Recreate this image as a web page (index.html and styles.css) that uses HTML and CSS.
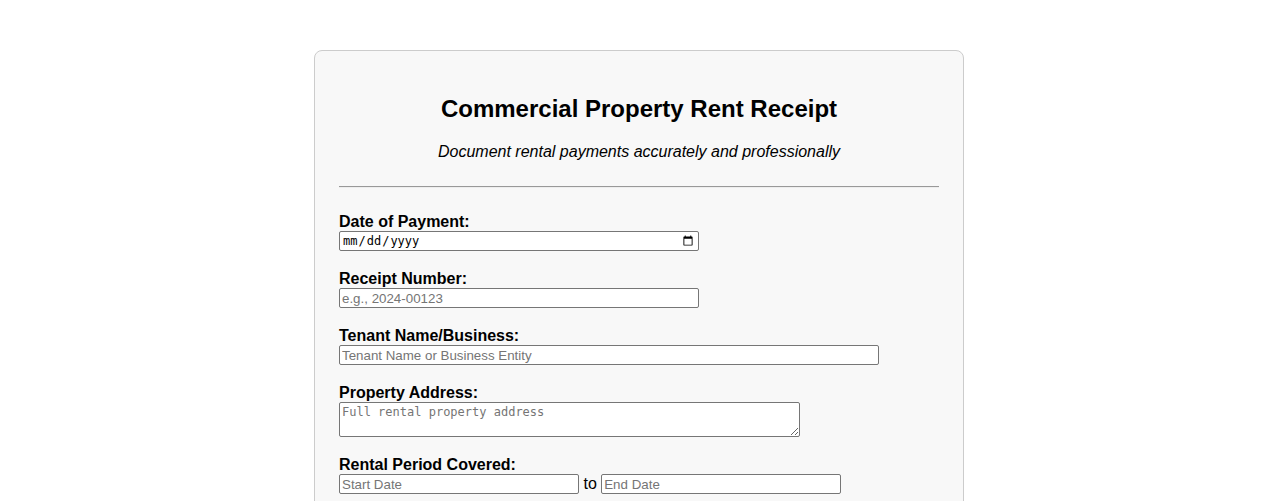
FILE: index.html
```html
<!DOCTYPE html>
<html lang="en">
<head>
<meta charset="utf-8">
<title>Commercial Property Rent Receipt</title>
<link rel="stylesheet" href="styles.css">
</head>
<body>
<div class="receipt">
  <h1 class="title">Commercial Property Rent Receipt</h1>
  <p class="subtitle">Document rental payments accurately and professionally</p>
  <hr class="divider">
  <form class="form">
    <div class="field">
      <label class="label" for="pay-date">Date of Payment:</label>
      <div class="control"><input class="input input-date" type="date" id="pay-date"></div>
    </div>
    <div class="field">
      <label class="label" for="receipt-no">Receipt Number:</label>
      <div class="control"><input class="input input-md" type="text" id="receipt-no" placeholder="e.g., 2024-00123"></div>
    </div>
    <div class="field">
      <label class="label" for="tenant">Tenant Name/Business:</label>
      <div class="control"><input class="input input-lg" type="text" id="tenant" placeholder="Tenant Name or Business Entity"></div>
    </div>
    <div class="field">
      <label class="label" for="address">Property Address:</label>
      <div class="control"><textarea class="textarea" id="address" placeholder="Full rental property address"></textarea></div>
    </div>
    <div class="field">
      <label class="label" for="start">Rental Period Covered:</label>
      <div class="control"><input class="input input-sm" type="text" id="start" placeholder="Start Date"> to <input class="input input-sm" type="text" id="end" placeholder="End Date"></div>
    </div>
  </form>
</div>
</body>
</html>
```

FILE: styles.css
```css
html, body {
  background: #ffffff;
}
body {
  margin: 0;
  padding: 0 8px;
  font-family: "Liberation Sans", Arial, sans-serif;
  font-size: 16px;
  color: #000;
}
.receipt {
  max-width: 600px;
  margin: 50px auto;
  padding: 24px;
  background: #f8f8f8;
  border: 1px solid #cccccc;
  border-radius: 8px;
}
.title {
  font-size: 24px;
  font-weight: bold;
  text-align: center;
  margin: 20px 0 20px;
}
.subtitle {
  font-style: italic;
  text-align: center;
  margin: 0;
}
.divider {
  margin: 25px 0 25px;
  border: 0;
  border-top: 1px solid #999;
  border-bottom: 1px solid #eee;
  height: 0;
}
.form {
  margin: 0;
}
.field {
  margin-bottom: 19px;
}
.label {
  display: block;
  font-weight: bold;
  margin-bottom: 0;
}
.control {
  line-height: normal;
}
.input {
  font-family: "Liberation Sans", Arial, sans-serif;
  font-size: 13.333px;
  padding: 1px 2px;
  border: 1px solid #767676;
  border-radius: 2px;
  background: #fff;
  height: 20px;
  box-sizing: border-box;
  margin: 0;
  vertical-align: baseline;
}
.input::placeholder {
  color: #757575;
}
.input-date {
  width: 360px;
  font-family: "DejaVu Sans Mono", monospace;
  font-size: 12px;
}
.input-md {
  width: 360px;
}
.input-lg {
  width: 540px;
}
.input-sm {
  width: 240px;
}
.textarea {
  width: 461px;
  height: 35px;
  box-sizing: border-box;
  font-family: "DejaVu Sans Mono", monospace;
  font-size: 12px;
  padding: 2px;
  border: 1px solid #767676;
  border-radius: 2px;
  margin: 0;
  vertical-align: top;
}
.textarea::placeholder {
  color: #757575;
}
```
